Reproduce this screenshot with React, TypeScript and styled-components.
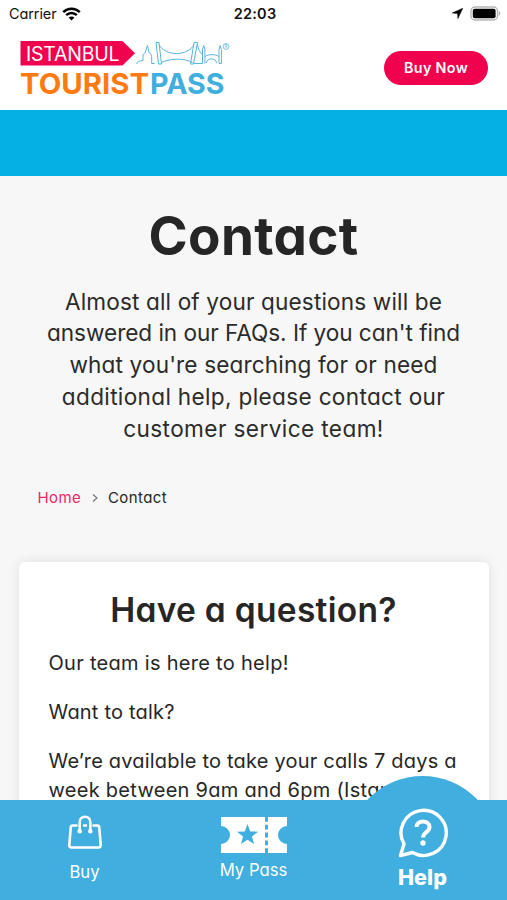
import React from "react";
import styled, { createGlobalStyle } from "styled-components";

const GlobalStyle = createGlobalStyle`
  * { box-sizing: border-box; }
  body {
    margin: 0;
    overflow: hidden;
    font-family: Inter, "Open Sans", sans-serif;
    font-feature-settings: "cv11" 1;
    color: #262626;
  }
  h1, h2, p { margin: 0; }
`;

const Screen = styled.div`
  width: 507px;
  height: 900px;
  overflow: hidden;
  display: flex;
  flex-direction: column;
  background: #f7f7f7;
`;

const StatusBar = styled.div`
  flex: none;
  height: 27px;
  padding: 0 6px 0 9px;
  display: grid;
  grid-template-columns: 1fr auto 1fr;
  align-items: center;
  background: #fff;
  color: #111;
  font-size: 14.5px;
`;

const StatusGroup = styled.div<{ $end?: boolean }>`
  display: flex;
  align-items: center;
  gap: ${(p) => (p.$end ? 7 : 5)}px;
  justify-content: ${(p) => (p.$end ? "flex-end" : "flex-start")};
`;

const Carrier = styled.span`
  letter-spacing: -0.1px;
`;

const Clock = styled.span`
  font-weight: 600;
  letter-spacing: 0.25px;
`;

const Header = styled.header`
  flex: none;
  height: 82.5px;
  padding: 0 19px 0 18px;
  display: flex;
  align-items: center;
  justify-content: space-between;
  background: #fff;
`;

const BuyButton = styled.button`
  width: 104px;
  height: 34px;
  margin-bottom: 1px;
  padding: 0;
  border: 0;
  border-radius: 17px;
  background: #f0024f;
  color: #fff;
  font: inherit;
  font-size: 14.3px;
  font-weight: 600;
  letter-spacing: 0.35px;
`;

const Band = styled.div`
  flex: none;
  height: 66px;
  background: #05b0e5;
`;

const Main = styled.main`
  flex: 1;
  min-height: 0;
  overflow: hidden;
  padding: 0 18.5px;
`;

const Title = styled.h1`
  padding-top: 30px;
  font-size: 53px;
  line-height: 60px;
  font-weight: 650;
  letter-spacing: 0.35px;
  text-align: center;
`;

const Intro = styled.p`
  padding-top: 20px;
  font-size: 22.6px;
  line-height: 31.9px;
  text-align: center;
  color: #2b2b2b;
`;

const Line = styled.span<{ $spacing: number }>`
  display: block;
  white-space: nowrap;
  letter-spacing: ${(p) => p.$spacing}px;
`;

const Breadcrumb = styled.nav`
  display: flex;
  align-items: center;
  padding: 43px 0 0 19px;
  font-size: 15px;
  line-height: 20px;
  letter-spacing: 0.4px;
`;

const HomeLink = styled.a`
  width: 53.5px;
  color: #e92766;
`;

const Separator = styled.svg`
  margin-right: 9px;
`;

const Card = styled.section`
  margin-top: 53.5px;
  height: 300px;
  padding: 28px 30px;
  border-radius: 6px;
  background: #fff;
  box-shadow: 0 0 12px rgba(0, 0, 0, 0.1);
`;

const CardTitle = styled.h2`
  font-size: 33.5px;
  line-height: 40px;
  font-weight: 620;
  letter-spacing: 0.3px;
  text-align: center;
`;

const CardText = styled.p<{ $top: number }>`
  margin-top: ${(p) => p.$top}px;
  font-size: 20px;
  line-height: 29px;
`;

const TabBar = styled.nav`
  position: relative;
  flex: none;
  height: 100.5px;
  display: grid;
  grid-template-columns: repeat(3, 169px);
  background: #40aede;
  color: #fff;
`;

const TabBulge = styled.div`
  position: absolute;
  left: 347px;
  top: -23.5px;
  width: 151px;
  height: 120px;
  border-radius: 75.5px 75.5px 0 0;
  background: #40aede;
`;

const Tab = styled.div<{ $top: number }>`
  position: relative;
  display: flex;
  flex-direction: column;
  align-items: center;
  padding-top: ${(p) => p.$top}px;
`;

const TabLabel = styled.span<{ $active?: boolean; $gap: number }>`
  margin-top: ${(p) => p.$gap}px;
  font-size: ${(p) => (p.$active ? 21.5 : 16.7)}px;
  font-weight: ${(p) => (p.$active ? 800 : 400)};
  line-height: 24px;
  letter-spacing: ${(p) => (p.$active ? 0.1 : 0)}px;
`;

const WifiIcon = () => (
  <svg width="19" height="14" viewBox="0 0 19 14" fill="none" stroke="#000" strokeWidth="2.5">
    <path d="M1.2 5.1C5.8.5 13.2.5 17.8 5.1" />
    <path d="M4.2 8.2c3-2.9 7.6-2.9 10.600 0" />
    <path d="M9.500 13.500 6.600 10.600c1.600-1.500 4.200-1.500 5.800 0z" fill="#000" stroke="none" />
  </svg>
);

const LocationIcon = () => (
  <svg width="11" height="11" viewBox="0 0 11 11">
    <path d="M10.800.2 5.900 10.600 5.500 5.500.2 5z" fill="#000" stroke="#000" strokeWidth=".5" strokeLinejoin="round" />
  </svg>
);

const BatteryIcon = () => (
  <svg width="31" height="15" viewBox="0 0 31 15">
    <rect x="1" y="1" width="26.500" height="13" rx="4" fill="#fff" stroke="#b5b5b5" strokeWidth="1.400" />
    <rect x="2.800" y="2.800" width="22.800" height="9.400" rx="2" fill="#000" />
    <path d="M28.800 5c2 .7 2 4.300 0 5z" fill="#b5b5b5" />
  </svg>
);

const Logo = () => (
  <svg width="214" height="60" viewBox="18 38 214 60">
    <path d="M20.500 41h102l12.500 12.300-12.500 12.300h-102z" fill="#f0024f" />
    <text x="26" y="60.500" fontSize="19.500" fontWeight="400" fill="#fff" textLength="93.500">ISTANBUL</text>
    <text x="20" y="93.500" fontSize="29" fontWeight="750" fill="#ff7a12" textLength="129" lengthAdjust="spacingAndGlyphs">TOURIST</text>
    <text x="150" y="93.500" fontSize="29" fontWeight="750" fill="#40aede" textLength="74.500" lengthAdjust="spacingAndGlyphs">PASS</text>
    <g fill="none" stroke="#58b5de" strokeWidth="1" strokeLinejoin="round">
      <path d="M136.500 64c1-2.500 3-3 6.500-3.500V55l2.200-2.500 2.200-7 1.600 7c2.200 1 2.700 3 2.700 6.500v4.500h3" />
      <path d="M156 42.500 158.500 64h3L159 42.500z" />
      <path d="M159 44.500c6 12 29 12 35 0M161.500 62.500c9-4.500 23-4.500 31 0" />
      <path d="M197.500 42.500 193.500 64h-3l3.500-21.500z" />
      <path d="M197.500 44.500c1 5 2 8 5 10M194 63.500h8.500V49.500l1.200-4 1.200 4v14M205 56.500c4-2.500 10-2.500 14 0M206.500 63c0-5.500 10-5.500 10 0M219 63.500v-14l1.200-4 1.200 4v14z" />
      <circle cx="226" cy="46.500" r="2.900" strokeWidth=".8" />
    </g>
    <text x="224.500" y="48.200" fontSize="4.500" fill="#58b5de">R</text>
  </svg>
);

const BagIcon = () => (
  <svg width="36" height="36" viewBox="0 0 36 36" fill="none" stroke="#fff" strokeWidth="2.600" strokeLinecap="round" strokeLinejoin="round">
    <path d="M9.500 10.500H5.500q-1.500 0-1.700 1.500L2.300 30Q2.200 32.500 4.500 32.500h27q2.300 0 2.200-2.500l-1.500-18Q32 10.500 30.500 10.500h-4M17 10.500h2" />
    <path d="M12.700 16.500V7a5.300 5.300 0 0 1 10.600 0v9.500" />
    <circle cx="12.700" cy="16.200" r="1" />
    <circle cx="23.300" cy="16.200" r="1" />
  </svg>
);

const TicketIcon = () => (
  <svg width="66" height="36" viewBox="0 0 66 36">
    <path fill="#fff" d="M0 0h66v9a9 9 0 0 0 0 18v9H0v-9A9 9 0 0 0 0 9z" />
    <path fill="#40aede" d="m26.500 7 2.700 7.400 7.900.3-6.200 4.800 2.200 7.600-6.600-4.400-6.600 4.400 2.200-7.600-6.200-4.800 7.900-.3z" />
    <path d="M45.500 0v36" stroke="#40aede" strokeWidth="3" strokeDasharray="4.800 3" />
  </svg>
);

const HelpIcon = () => (
  <svg width="50" height="50" viewBox="0 0 50 50" fill="none" stroke="#fff" strokeWidth="3.400" strokeLinejoin="round">
    <path d="M6 36A22.600 22.600 0 1 1 14.500 44.500L2.500 47.500z" />
    <path d="M18.500 19c0-7.500 13-7.500 13 0 0 5.500-6.500 5-6.500 10.500" strokeWidth="4" />
    <circle cx="25" cy="35" r="2.700" fill="#fff" stroke="none" />
  </svg>
);

const introLines: [string, number][] = [
  ["Almost all of your questions will be", 0.14],
  ["answered in our FAQs. If you can't find", -0.05],
  ["what you're searching for or need", 0.14],
  ["additional help, please contact our", 0.33],
  ["customer service team!", 0.4],
];

export default function App() {
  return (
    <Screen>
      <GlobalStyle />
      <StatusBar>
        <StatusGroup>
          <Carrier>Carrier</Carrier>
          <WifiIcon />
        </StatusGroup>
        <Clock>22:03</Clock>
        <StatusGroup $end>
          <LocationIcon />
          <BatteryIcon />
        </StatusGroup>
      </StatusBar>
      <Header>
        <Logo />
        <BuyButton>Buy Now</BuyButton>
      </Header>
      <Band />
      <Main>
        <Title>Contact</Title>
        <Intro>
          {introLines.map(([text, spacing]) => (
            <Line key={text} $spacing={spacing}>{text}</Line>
          ))}
        </Intro>
        <Breadcrumb>
          <HomeLink>Home</HomeLink>
          <Separator width="8" height="10" viewBox="0 0 8 10" fill="none" stroke="#777" strokeWidth="1.200">
            <path d="m2 1.500 4 3.500-4 3.500" />
          </Separator>
          <span>Contact</span>
        </Breadcrumb>
        <Card>
          <CardTitle>Have a question?</CardTitle>
          <CardText $top={19}><Line $spacing={0.29}>Our team is here to help!</Line></CardText>
          <CardText $top={20}><Line $spacing={0.2}>Want to talk?</Line></CardText>
          <CardText $top={20}>
            <Line $spacing={0.2}>We’re available to take your calls 7 days a</Line>
            <Line $spacing={0.28}>week between 9am and 6pm (Istanbul</Line>
          </CardText>
        </Card>
      </Main>
      <TabBar>
        <TabBulge />
        <Tab $top={15}>
          <BagIcon />
          <TabLabel $gap={9}>Buy</TabLabel>
        </Tab>
        <Tab $top={17.5}>
          <TicketIcon />
          <TabLabel $gap={5}>My Pass</TabLabel>
        </Tab>
        <Tab $top={8.5}>
          <HelpIcon />
          <TabLabel $active $gap={7}>Help</TabLabel>
        </Tab>
      </TabBar>
    </Screen>
  );
}
